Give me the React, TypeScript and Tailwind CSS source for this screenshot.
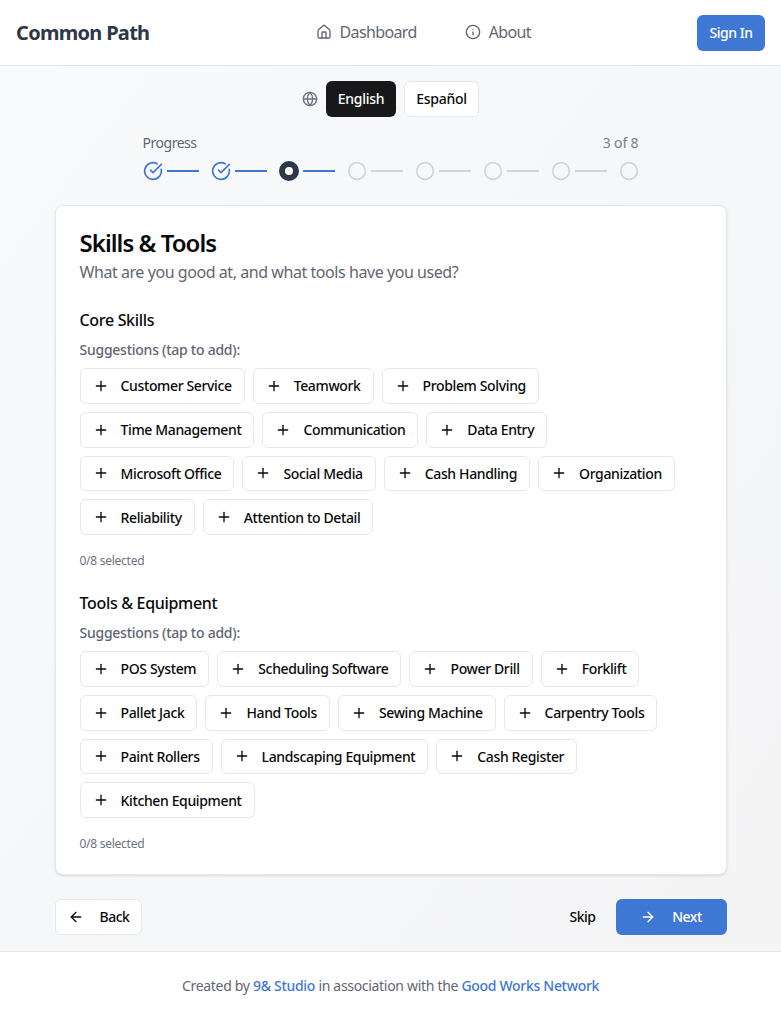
import { ArrowLeft, ArrowRight, Circle, CircleCheckBig, Globe, House, Info, Plus } from 'lucide-react';

const coreSkills = [
  'Customer Service',
  'Teamwork',
  'Problem Solving',
  'Time Management',
  'Communication',
  'Data Entry',
  'Microsoft Office',
  'Social Media',
  'Cash Handling',
  'Organization',
  'Reliability',
  'Attention to Detail',
];

const tools = [
  'POS System',
  'Scheduling Software',
  'Power Drill',
  'Forklift',
  'Pallet Jack',
  'Hand Tools',
  'Sewing Machine',
  'Carpentry Tools',
  'Paint Rollers',
  'Landscaping Equipment',
  'Cash Register',
  'Kitchen Equipment',
];

const steps = [0, 1, 2, 3, 4, 5, 6, 7];

const Section = ({ title, items }: { title: string; items: string[] }) => (
  <div>
    <h3 className="text-[16px] leading-6 font-medium tracking-[-0.02em] text-[#09090b]">{title}</h3>
    <p className="mt-[8px] text-[14px] leading-5 font-medium tracking-[-0.018em] text-[#5f6673]">Suggestions (tap to add):</p>
    <div className="mt-[8px] flex flex-wrap gap-x-2 gap-y-2">
      {items.map((item) => (
        <button
          key={item}
          className="flex h-[35.75px] items-center gap-3 rounded-md border border-[#e5e7eb] bg-white px-3 text-[14px] font-medium tracking-[-0.026em] text-[#09090b]"
        >
          <Plus size={16} />
          <span>{item}</span>
        </button>
      ))}
    </div>
    <p className="mt-[18px] text-[12px] leading-4 tracking-[-0.022em] text-[#6b7280]">0/8 selected</p>
  </div>
);

const App = () => {
  return (
    <div className="flex min-h-[1022px] flex-col bg-gradient-to-br from-[#f8fafc] to-[#f4f4f5] font-['Noto_Sans',sans-serif] tracking-[-0.03em]">
      {/* Header */}
      <header className="flex h-[66px] items-center justify-between border-b border-[#e5e7eb] bg-white px-4">
        <div className="text-[20px] font-bold tracking-[-0.035em] text-[#2d3748]">Common Path</div>
        <nav className="flex items-center gap-12 pb-px text-[16px] tracking-[-0.04em] text-[#5f6673]">
          <a className="flex items-center gap-2">
            <House size={16} />
            Dashboard
          </a>
          <a className="flex items-center gap-2">
            <Info size={16} />
            About
          </a>
        </nav>
        <button className="h-9 w-[68px] rounded-md bg-[#3f77d4] pb-px text-[14px] font-medium text-white">Sign In</button>
      </header>

      <main className="flex flex-1 flex-col items-center">
        {/* Language */}
        <div className="mt-[15px] flex items-center gap-2">
          <Globe size={16} className="text-[#6b7280]" />
          <button className="h-9 w-[70px] rounded-md bg-[#18181b] pb-px text-[14px] font-medium tracking-[-0.02em] text-white">English</button>
          <button className="h-9 w-[75px] rounded-md border border-[#e5e7eb] bg-white pb-px text-[14px] font-medium tracking-[-0.02em] text-[#09090b]">
            Español
          </button>
        </div>

        {/* Progress */}
        <div className="mt-[16px] w-[496px]">
          <div className="flex items-center justify-between text-[14px] leading-5">
            <span className="text-[#5f6673]">Progress</span>
            <span className="tracking-[-0.01em] text-[#7b8089]">3 of 8</span>
          </div>
          <div className="mt-[8px] flex items-center">
            {steps.map((step) => (
              <div key={step} className={step < 7 ? 'flex flex-1 items-center' : 'flex items-center'}>
                {step < 2 && <CircleCheckBig size={20} className="text-[#3f77d4]" />}
                {step === 2 && (
                  <span className="flex h-5 w-5 items-center justify-center rounded-full border-[6px] border-[#2d3748] bg-white" />
                )}
                {step > 2 && <Circle size={20} className="text-[#d1d5db]" />}
                {step < 7 && <div className={`ml-1 h-[2px] w-8 ${step < 3 ? 'bg-[#3f77d4]' : 'bg-[#d1d5db]'}`} />}
              </div>
            ))}
          </div>
        </div>

        {/* Card */}
        <div className="mt-[24px] w-[672px] rounded-lg border border-[#e5e7eb] bg-white px-6 pt-[23px] pb-[22px] shadow-sm">
          <h1 className="text-[24px] leading-7 font-semibold tracking-[-0.04em] text-[#09090b]">Skills &amp; Tools</h1>
          <p className="mt-[3px] text-[16px] leading-6 tracking-[-0.0275em] text-[#5f6673]">What are you good at, and what tools have you used?</p>
          <div className="mt-[24px] flex flex-col gap-[22px]">
            <Section title="Core Skills" items={coreSkills} />
            <Section title="Tools & Equipment" items={tools} />
          </div>
        </div>

        {/* Actions */}
        <div className="mt-[24px] flex w-[672px] items-center justify-between">
          <button className="flex h-9 items-center gap-4 rounded-md border border-[#e5e7eb] bg-white px-3 pb-px text-[14px] font-medium text-[#09090b]">
            <ArrowLeft size={16} />
            Back
          </button>
          <div className="flex items-center gap-5">
            <button className="pb-px text-[14px] font-medium text-[#09090b]">Skip</button>
            <button className="flex h-9 w-[111px] items-center justify-center gap-4 rounded-md bg-[#3f77d4] pb-px text-[14px] font-medium text-white">
              <ArrowRight size={16} />
              Next
            </button>
          </div>
        </div>
      </main>

      {/* Footer */}
      <footer className="mt-[16px] flex h-[71px] items-center justify-center border-t border-[#e5e7eb] bg-white pb-[3px] text-[14px] tracking-[-0.022em] text-[#5f6673]">
        <p>
          Created by <a className="font-medium text-[#3f77d4]">9&amp; Studio</a> in association with the{' '}
          <a className="font-medium text-[#3f77d4]">Good Works Network</a>
        </p>
      </footer>
    </div>
  );
};

export default App;
